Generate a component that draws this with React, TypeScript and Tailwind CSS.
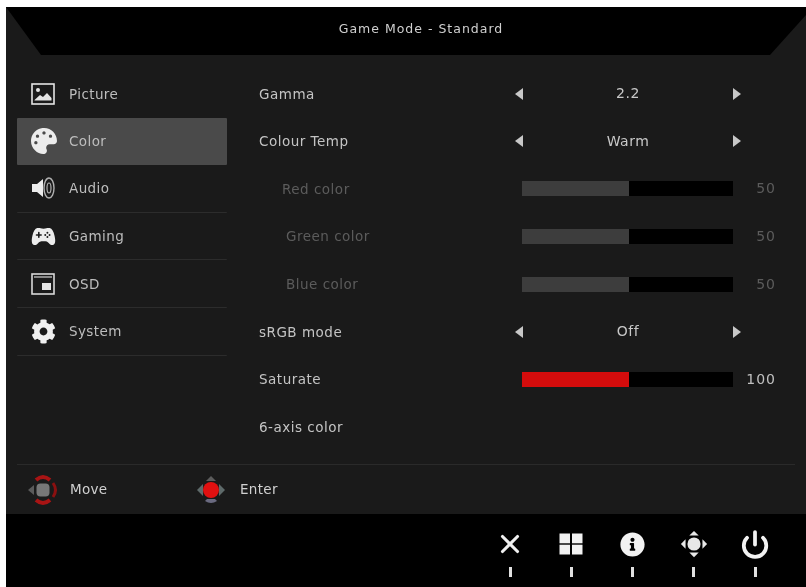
import { FaCog, FaInfoCircle, FaPalette } from 'react-icons/fa'
import { IoGameController } from 'react-icons/io5'
import { Power, X } from 'lucide-react'

function PictureIcon() {
  return (
    <svg width="24" height="22" viewBox="0 0 24 22">
      <rect x="1" y="1" width="22" height="20" fill="none" stroke="#e4e4e4" strokeWidth="1.6" />
      <circle cx="7" cy="7" r="2" fill="#e4e4e4" />
      <path d="M3.5 17 L9 12 L12 14 L16 10 L20.5 15 V17.5 H3.5 Z" fill="#e4e4e4" />
    </svg>
  )
}

function AudioIcon() {
  return (
    <svg width="26" height="24" viewBox="0 0 26 24" fill="none">
      <path d="M1 8 H6 L12 3 V21 L6 16 H1 Z" fill="#ececec" />
      <ellipse cx="18" cy="12" rx="2" ry="5" stroke="#b0b0b0" strokeWidth="1.2" />
      <ellipse cx="18" cy="12" rx="5" ry="10" stroke="#b0b0b0" strokeWidth="1.4" />
    </svg>
  )
}

function DsdIcon() {
  return (
    <svg width="24" height="22" viewBox="0 0 24 22">
      <rect x="1" y="1" width="22" height="20" fill="none" stroke="#d8d8d8" strokeWidth="1.6" />
      <rect x="3" y="3" width="18" height="2" fill="#888" />
      <rect x="11" y="10" width="9" height="7" fill="#e4e4e4" />
    </svg>
  )
}

function GridIcon() {
  return (
    <svg width="24" height="22" viewBox="0 0 24 22" fill="#f2f2f2">
      <rect x="0.5" y="0.5" width="10.5" height="9.8" />
      <rect x="13" y="0.5" width="10.5" height="9.8" />
      <rect x="0.5" y="11.7" width="10.5" height="9.8" />
      <rect x="13" y="11.7" width="10.5" height="9.8" />
    </svg>
  )
}

function MoveIcon() {
  return (
    <svg width="32" height="32" viewBox="0 0 32 32" fill="none">
      <path d="M9 6 Q16 0 23 6" stroke="#a81414" strokeWidth="4" />
      <path d="M9 26 Q16 32 23 26" stroke="#a81414" strokeWidth="4" />
      <path d="M26 9 Q31 16 26 23" stroke="#8a1010" strokeWidth="3" />
      <path d="M1 16 L7 11 V21 Z" fill="#5a5a5a" />
      <rect x="9.5" y="9.5" width="13" height="13" rx="4" fill="#777777" />
    </svg>
  )
}

function EnterIcon() {
  return (
    <svg width="32" height="32" viewBox="0 0 32 32">
      <path d="M16 2 L21 7 H11 Z" fill="#5c5c5c" />
      <path d="M10 27 Q16 31 22 27 L20 25 H12 Z" fill="#6a6a80" />
      <path d="M2 16 L8 10 V22 Z" fill="#5e6a6a" />
      <path d="M30 16 L24 10 V22 Z" fill="#5e6a6a" />
      <circle cx="16" cy="16" r="8" fill="#e01010" />
    </svg>
  )
}

function NavIcon() {
  return (
    <svg width="32" height="32" viewBox="0 0 32 32" fill="#e8e8e8">
      <path d="M16 2 L21 7 H11 Z" />
      <path d="M16 30 L21 25 H11 Z" />
      <path d="M2 16 L7 11 V21 Z" />
      <path d="M30 16 L25 11 V21 Z" />
      <circle cx="16" cy="16" r="7" />
    </svg>
  )
}

const menu = [
  { label: 'Picture', icon: <PictureIcon /> },
  { label: 'Color', icon: <FaPalette size={26} color="#ececec" /> },
  { label: 'Audio', icon: <AudioIcon /> },
  { label: 'Gaming', icon: <IoGameController size={25} color="#ececec" /> },
  { label: 'OSD', icon: <DsdIcon /> },
  { label: 'System', icon: <FaCog size={25} color="#f0f0f0" /> },
]

function Arrows({ value }: { value: string }) {
  return (
    <div className="-ml-[1px] flex w-[226px] items-center justify-between text-[14px] tracking-[0.5px] text-[#c8c8c8]">
      <span className="h-0 w-0 border-y-[6px] border-r-[8px] border-y-transparent border-r-[#c8c8c8]" />
      <span>{value}</span>
      <span className="h-0 w-0 border-y-[6px] border-l-[8px] border-y-transparent border-l-[#c8c8c8]" />
    </div>
  )
}

function Slider({ value, active }: { value: number; active?: boolean }) {
  return (
    <div className="ml-[6px] flex items-center">
      <div className="h-[15px] w-[211px] bg-black">
        <div className={`h-full w-[107px] ${active ? 'bg-[#d40c0c]' : 'bg-[#3d3d3d]'}`} />
      </div>
      <span className={`w-[43px] text-right text-[14px] tracking-[1px] ${active ? 'text-[#c0c0c0]' : 'text-[#5c5c5c]'}`}>{value}</span>
    </div>
  )
}

const rows = [
  { label: 'Gamma', value: '2.2' },
  { label: 'Colour Temp', value: 'Warm' },
  { label: 'Red color', slider: 50, dim: true, indent: 'pl-[23px]' },
  { label: 'Green color', slider: 50, dim: true, indent: 'pl-[27px]' },
  { label: 'Blue color', slider: 50, dim: true, indent: 'pl-[27px]' },
  { label: 'sRGB mode', value: 'Off' },
  { label: 'Saturate', slider: 100, active: true },
  { label: '6-axis color' },
]

export default function App() {
  return (
    <div className="h-[587px] w-[806px] overflow-hidden bg-white pl-[6px] pt-[7px] font-['DejaVu_Sans',sans-serif] blur-[0.7px]">
      <div className="flex h-[580px] w-[800px] flex-col bg-[#1a1a1a]">
        {/* Cabecera */}
        <div className="flex h-[48px] items-center justify-center bg-black pb-[3px] pl-[30px] text-[12.5px] tracking-[1px] text-[#d0d0d0] [clip-path:polygon(0_0,100%_0,100%_8px,764px_100%,35px_100%)]">
          Game Mode - Standard
        </div>

        <div className="flex flex-1 pl-[11px] pt-[15px]">
          {/* Menu lateral */}
          <div className="w-[210px]">
            {menu.map((m, i) => (
              <div
                key={m.label}
                className={`flex h-[47.6px] items-center rounded-[1px] pl-[14px] text-[13.5px] tracking-[0.4px] text-[#bdbdbd] ${
                  i === 1 ? 'bg-[#4a4a4a]' : i > 1 ? 'border-b border-[#2c2c2c]' : ''
                }`}
              >
                <span className="flex w-[38px] justify-start">{m.icon}</span>
                {m.label}
              </div>
            ))}
          </div>

          {/* Opciones */}
          <div className="ml-[32px] flex-1">
            {rows.map(r => (
              <div key={r.label} className="flex h-[47.6px] items-center">
                <div className={`w-[257px] text-[13.5px] tracking-[0.5px] ${r.dim ? 'text-[#5c5c5c]' : 'text-[#c4c4c4]'} ${r.indent ?? ''}`}>{r.label}</div>
                {r.value && <Arrows value={r.value} />}
                {r.slider && <Slider value={r.slider} active={r.active} />}
              </div>
            ))}
          </div>
        </div>

        {/* Ayuda */}
        <div className="mx-[11px] flex h-[50px] items-center border-t border-[#2a2a2a] pl-[10px] text-[13.5px] tracking-[0.3px] text-[#d0d0d0]">
          <MoveIcon />
          <span className="ml-[11px] w-[125px]">Move</span>
          <EnterIcon />
          <span className="ml-[13px]">Enter</span>
        </div>

        {/* Botones */}
        <div className="flex h-[73px] justify-end gap-[37.2px] bg-black pr-[39px] pt-[15px]">
          {[
            <X key="x" size={30} strokeWidth={2.5} color="#efefef" />,
            <GridIcon key="g" />,
            <FaInfoCircle key="i" size={25} color="#f2f2f2" />,
            <NavIcon key="d" />,
            <Power key="p" size={33} strokeWidth={3} color="#f2f2f2" />,
          ].map((icon, i) => (
            <div key={i} className="flex w-[24px] flex-col items-center">
              <div className="flex h-[30px] w-[30px] items-center justify-center">{icon}</div>
              <div className="mt-[8px] h-[10px] w-[3px] bg-[#e0e0e0]" />
            </div>
          ))}
        </div>
      </div>
    </div>
  )
}
